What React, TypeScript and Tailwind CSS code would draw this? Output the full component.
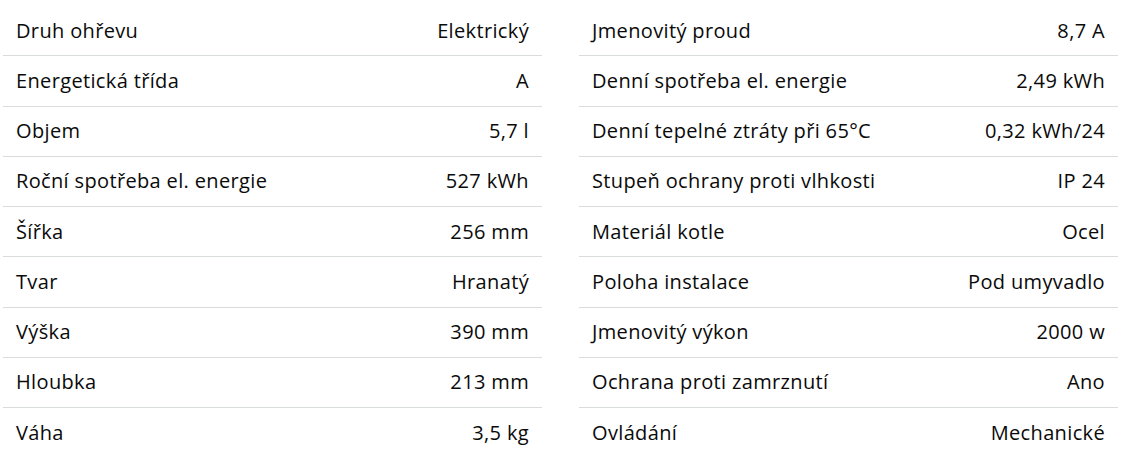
const LEFT: [string, string][] = [
  ["Druh ohřevu", "Elektrický"],
  ["Energetická třída", "A"],
  ["Objem", "5,7 l"],
  ["Roční spotřeba el. energie", "527 kWh"],
  ["Šířka", "256 mm"],
  ["Tvar", "Hranatý"],
  ["Výška", "390 mm"],
  ["Hloubka", "213 mm"],
  ["Váha", "3,5 kg"],
];

const RIGHT: [string, string][] = [
  ["Jmenovitý proud", "8,7 A"],
  ["Denní spotřeba el. energie", "2,49 kWh"],
  ["Denní tepelné ztráty při 65°C", "0,32 kWh/24"],
  ["Stupeň ochrany proti vlhkosti", "IP 24"],
  ["Materiál kotle", "Ocel"],
  ["Poloha instalace", "Pod umyvadlo"],
  ["Jmenovitý výkon", "2000 w"],
  ["Ochrana proti zamrznutí", "Ano"],
  ["Ovládání", "Mechanické"],
];

function SpecList({ rows }: { rows: [string, string][] }) {
  return (
    <dl className="flex flex-col">
      {rows.map(([label, value], i) => (
        <div
          key={label}
          className={
            "flex h-[50.25px] items-center justify-between px-[13px] " +
            (i < rows.length - 1 ? "border-b border-[#d9dcdd]" : "")
          }
        >
          <dt>{label}</dt>
          <dd>{value}</dd>
        </div>
      ))}
    </dl>
  );
}

export default function App() {
  return (
    <div
      className="grid h-[458px] w-[1126px] grid-cols-[539px_539px] gap-x-[37px] bg-white pl-[3px] pt-[6px] text-[20px] font-medium tracking-[0.35px] text-[#0a0a0a]"
      style={{ fontFamily: "'Open Sans', sans-serif" }}
    >
      <SpecList rows={LEFT} />
      <SpecList rows={RIGHT} />
    </div>
  );
}
